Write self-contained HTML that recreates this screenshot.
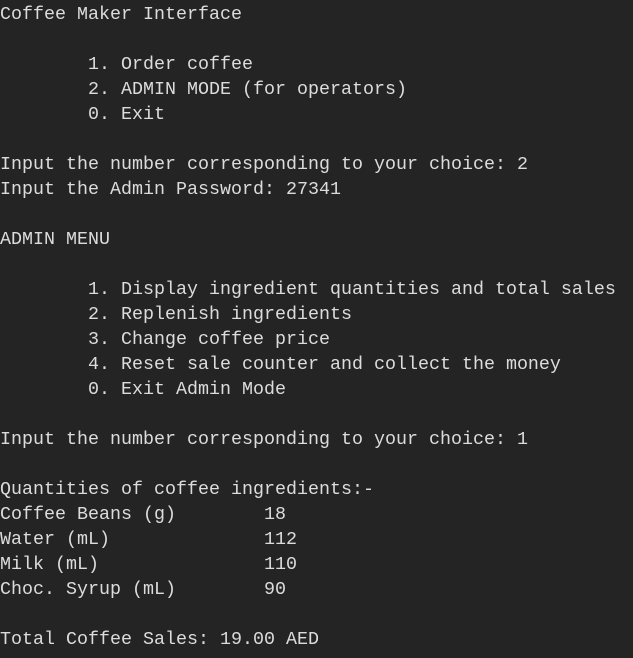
<!DOCTYPE html>
<html><head><style>
html,body{margin:0;padding:0;background:#242424;width:633px;height:658px;overflow:hidden}
pre{margin:0;padding:2px 0 0 0;font-family:"Liberation Mono",monospace;font-size:18.33px;line-height:25px;color:#dcdcdc;white-space:pre}
</style></head><body><pre>Coffee Maker Interface

        1. Order coffee
        2. ADMIN MODE (for operators)
        0. Exit

Input the number corresponding to your choice: 2
Input the Admin Password: 27341

ADMIN MENU

        1. Display ingredient quantities and total sales
        2. Replenish ingredients
        3. Change coffee price
        4. Reset sale counter and collect the money
        0. Exit Admin Mode

Input the number corresponding to your choice: 1

Quantities of coffee ingredients:-
Coffee Beans (g)        18
Water (mL)              112
Milk (mL)               110
Choc. Syrup (mL)        90

Total Coffee Sales: 19.00 AED</pre></body></html>
